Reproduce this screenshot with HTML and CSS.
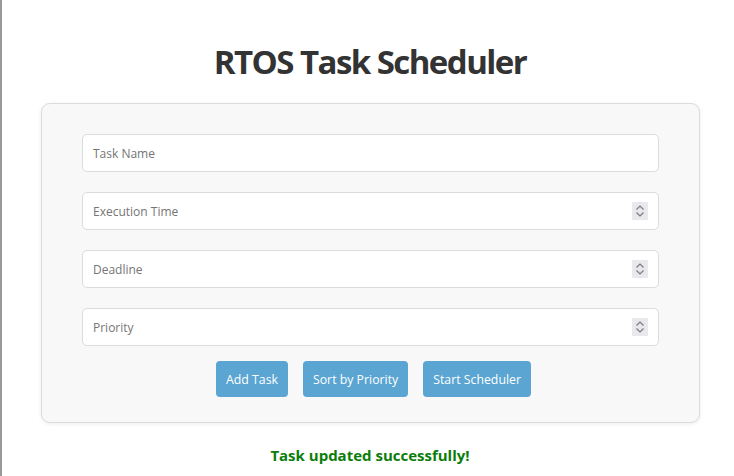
FILE: index.html
```html
<!DOCTYPE html>
<html lang="en">
<head>
<meta charset="utf-8">
<title>RTOS Task Scheduler</title>
<link rel="stylesheet" href="styles.css">
</head>
<body>
<div class="page">
  <h1 class="title">RTOS Task Scheduler</h1>
  <div class="card">
    <input class="field" type="text" placeholder="Task Name">
    <div class="num-wrap">
      <input class="field num" type="number" placeholder="Execution Time">
      <span class="spin"><svg width="16" height="18" viewBox="0 0 16 18"><path d="M4.5 7.5 L8 4 L11.5 7.5 M4.5 10.5 L8 14 L11.5 10.5" fill="none" stroke="#7a7a7e" stroke-width="1.2"/></svg></span>
    </div>
    <div class="num-wrap">
      <input class="field num" type="number" placeholder="Deadline">
      <span class="spin"><svg width="16" height="18" viewBox="0 0 16 18"><path d="M4.5 7.5 L8 4 L11.5 7.5 M4.5 10.5 L8 14 L11.5 10.5" fill="none" stroke="#7a7a7e" stroke-width="1.2"/></svg></span>
    </div>
    <div class="num-wrap">
      <input class="field num" type="number" placeholder="Priority">
      <span class="spin"><svg width="16" height="18" viewBox="0 0 16 18"><path d="M4.5 7.5 L8 4 L11.5 7.5 M4.5 10.5 L8 14 L11.5 10.5" fill="none" stroke="#7a7a7e" stroke-width="1.2"/></svg></span>
    </div>
    <div class="actions">
      <button class="btn">Add Task</button>
      <button class="btn">Sort by Priority</button>
      <button class="btn">Start Scheduler</button>
    </div>
  </div>
  <p class="message">Task updated successfully!</p>
</div>
</body>
</html>
```
FILE: styles.css
```css
html {
  background: #ffffff;
}
body {
  margin: 0;
  min-height: 476px;
  border-left: 2px solid #9a9a9a;
  padding-left: 4px;
  font-family: "Open Sans", "DejaVu Sans", sans-serif;
  color: #333;
  box-sizing: border-box;
}
.page {
  display: flex;
  flex-direction: column;
  align-items: center;
}
.title {
  margin: 40px 0 20px;
  font-size: 33px;
  line-height: 43px;
  letter-spacing: -1.55px;
  font-weight: 700;
  color: #333;
}
.card {
  box-sizing: border-box;
  width: 659px;
  margin-left: 1px;
  padding: 30px 40px 25px;
  background: #f8f8f8;
  border: 1px solid #dcdcdc;
  border-radius: 9px;
  box-shadow: 0 1px 4px rgba(0,0,0,0.08);
  display: flex;
  flex-direction: column;
  gap: 20px;
}
.num-wrap {
  position: relative;
}
.field {
  box-sizing: border-box;
  display: block;
  width: 100%;
  height: 38px;
  padding: 0 10px;
  border: 1px solid #dcdcdc;
  border-radius: 5px;
  background: #fff;
  font-family: "Open Sans", "DejaVu Sans", sans-serif;
  font-size: 12px;
  color: #333;
}
.field::placeholder {
  color: #757575;
}
.num {
  appearance: textfield;
  -moz-appearance: textfield;
}
.num::-webkit-inner-spin-button,
.num::-webkit-outer-spin-button {
  -webkit-appearance: none;
  margin: 0;
}
.spin {
  position: absolute;
  right: 11px;
  top: 10px;
  width: 16px;
  height: 18px;
  background: #e9e9ed;
  display: block;
}
.spin svg {
  display: block;
}
.actions {
  display: flex;
  justify-content: center;
  gap: 15px;
  margin-top: -5px;
  padding-left: 6px;
}
.btn {
  height: 36px;
  padding: 0 10px;
  border: none;
  border-radius: 4px;
  background: #5aa5d2;
  color: #fff;
  font-family: "Open Sans", "DejaVu Sans", sans-serif;
  font-size: 12.3px;
}
.message {
  margin: 22px 0 0;
  font-size: 15px;
  font-weight: 700;
  color: #0a7d0a;
}
```
